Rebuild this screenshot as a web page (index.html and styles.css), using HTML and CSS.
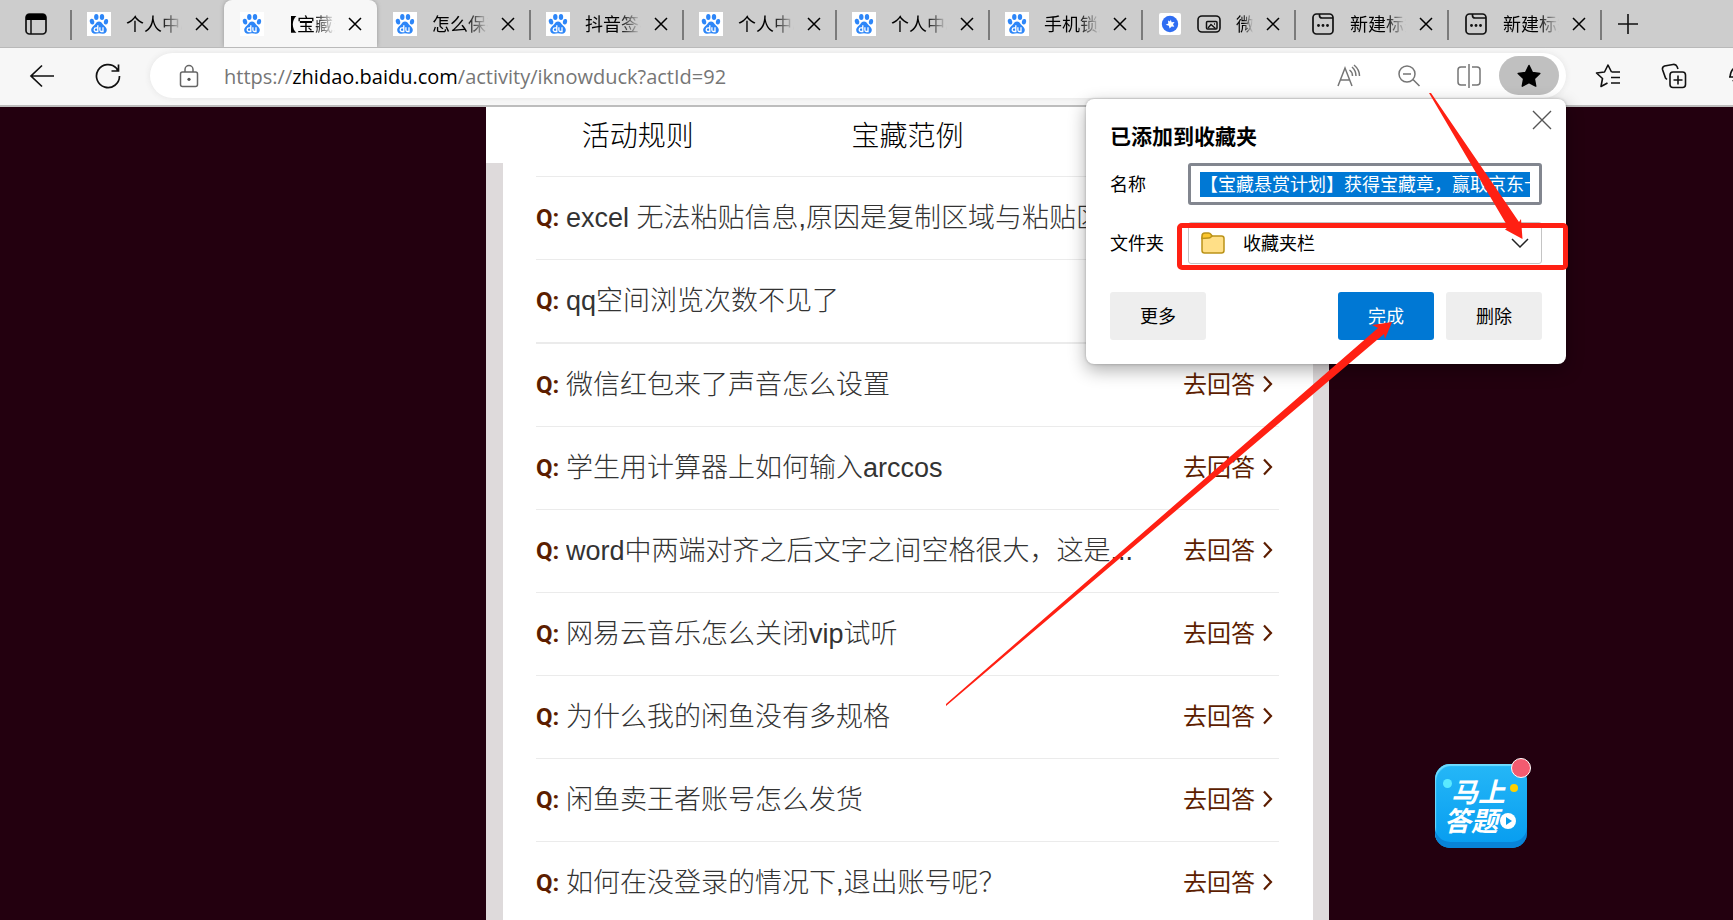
FILE: index.html
```html
<!DOCTYPE html>
<html lang="zh-CN">
<head>
<meta charset="utf-8">
<title>【宝藏悬赏计划】</title>
<link rel="stylesheet" href="styles.css">
</head>
<body>
<svg class="defs" width="0" height="0" aria-hidden="true">
  <symbol id="paw" viewBox="0 0 24 24">
    <rect width="24" height="24" fill="#fff"/>
    <g fill="#2d86f8">
      <ellipse cx="9.3" cy="5" rx="2.2" ry="3"/>
      <ellipse cx="15" cy="5" rx="2.2" ry="3"/>
      <ellipse cx="5" cy="9.6" rx="2.2" ry="2.9" transform="rotate(-12 5 9.6)"/>
      <ellipse cx="19" cy="9.8" rx="2.1" ry="2.8" transform="rotate(12 19 9.8)"/>
      <path d="M12 9.4c2 0 2.8 1.4 3.8 2.8 1.300 1.700 4 2.900 4 5.800 0 2.400-1.700 3.700-3.800 3.700-1.500 0-2.600-.4-4-.4s-2.500.4-4 .4c-2.200 0-3.800-1.400-3.800-3.700 0-2.900 2.700-4.100 4-5.800 1-1.400 1.800-2.800 3.800-2.800z"/>
    </g>
    <g fill="none" stroke="#fff" stroke-width="1.300"><path d="M10.800 13.200v6.300H9a1.700 1.700 0 0 1 0-3.600h1.800M12.900 15.300v2.700c0 1 .5 1.500 1.400 1.500h1.700v-4.300"/></g>
  </symbol>
  <symbol id="close" viewBox="0 0 14 14"><path d="M1 1l12 12M13 1L1 13" fill="none" stroke="currentColor" stroke-width="1.500"/></symbol>
  <symbol id="newtab" viewBox="0 0 22 22"><g fill="none" stroke="#111" stroke-width="1.700"><rect x="1" y="1" width="20" height="20" rx="3.500"/><path d="M7.500 1v1.500q0 2.500 2.500 2.500h11"/></g><g fill="#111"><circle cx="6.500" cy="12.500" r="1.400"/><circle cx="11" cy="12.500" r="1.400"/><circle cx="15.500" cy="12.500" r="1.400"/></g></symbol>
  <symbol id="go" viewBox="0 0 11 18"><path d="M2 1.500L9 9l-7 7.500" fill="none" stroke="currentColor" stroke-width="2.200"/></symbol>
</svg>

<header class="browser">
  <nav class="tabstrip" aria-label="标签页">
    <button class="tab-actions" aria-label="标签操作"><svg width="22" height="22" viewBox="0 0 22 22"><rect x="1" y="1" width="20" height="20" rx="3.500" fill="none" stroke="#111" stroke-width="1.700"/><path d="M1 7V4q0-3 3-3h14q3 0 3 3v3z" fill="#000"/><path d="M6 7v14" stroke="#111" stroke-width="1.500"/></svg></button>
    <div class="tab no-line"><svg class="fav"><use href="#paw"/></svg><span class="label">个人中心</span><button class="x" aria-label="关闭"><svg><use href="#close"/></svg></button></div>
    <div class="tab active"><svg class="fav"><use href="#paw"/></svg><span class="label">【宝藏悬</span><button class="x" aria-label="关闭"><svg><use href="#close"/></svg></button></div>
    <div class="tab"><svg class="fav"><use href="#paw"/></svg><span class="label">怎么保存</span><button class="x" aria-label="关闭"><svg><use href="#close"/></svg></button></div>
    <div class="tab"><svg class="fav"><use href="#paw"/></svg><span class="label">抖音签名</span><button class="x" aria-label="关闭"><svg><use href="#close"/></svg></button></div>
    <div class="tab"><svg class="fav"><use href="#paw"/></svg><span class="label">个人中心</span><button class="x" aria-label="关闭"><svg><use href="#close"/></svg></button></div>
    <div class="tab"><svg class="fav"><use href="#paw"/></svg><span class="label">个人中心</span><button class="x" aria-label="关闭"><svg><use href="#close"/></svg></button></div>
    <div class="tab"><svg class="fav"><use href="#paw"/></svg><span class="label">手机锁屏</span><button class="x" aria-label="关闭"><svg><use href="#close"/></svg></button></div>
    <div class="tab"><svg class="fav" viewBox="0 0 24 24"><rect x="1" y="1" width="22" height="22" rx="2" fill="#fff"/><circle cx="12" cy="12" r="8.200" fill="#2f6df2"/><path d="M12.800 7.500l.8 2.700 3-.2-1.600 2.300 1.300 2.500-2.700-.4-2 2-.7-2.700-3.200-1 2.600-1.300-.3-2.800 2 1z" fill="#fff"/></svg><svg class="pip" viewBox="0 0 24 18"><rect x="1" y="1" width="22" height="16" rx="4" fill="none" stroke="#111" stroke-width="1.600"/><rect x="9.500" y="6.500" width="10.500" height="7.500" rx="1" fill="none" stroke="#111" stroke-width="1.500"/><path d="M11 13l3-3.500 4.500 4M17 9h1" fill="none" stroke="#111" stroke-width="1.300"/></svg><span class="label">微信</span><button class="x" aria-label="关闭"><svg><use href="#close"/></svg></button></div>
    <div class="tab"><svg class="fav" viewBox="-1 -1 24 24"><use href="#newtab" width="22" height="22"/></svg><span class="label">新建标签</span><button class="x" aria-label="关闭"><svg><use href="#close"/></svg></button></div>
    <div class="tab"><svg class="fav" viewBox="-1 -1 24 24"><use href="#newtab" width="22" height="22"/></svg><span class="label">新建标签</span><button class="x" aria-label="关闭"><svg><use href="#close"/></svg></button></div>
    <button class="add" aria-label="新建标签页"><svg width="22" height="22" viewBox="0 0 22 22"><path d="M11 1v20M1 11h20" stroke="#111" stroke-width="1.600"/></svg></button>
  </nav>

  <div class="toolbar">
    <button class="tool" aria-label="返回"><svg width="26" height="24" viewBox="0 0 26 24"><path d="M13 1.500L2 12l11 10.500M2 12h23" fill="none" stroke="#111" stroke-width="1.700"/></svg></button>
    <button class="tool" aria-label="刷新"><svg width="26" height="26" viewBox="0 0 26 26"><path d="M24.500 13A11.500 11.500 0 1 1 21.500 5.300L23 8M23.500 1.500V8h-7" fill="none" stroke="#111" stroke-width="1.700"/></svg></button>
    <div class="omnibox">
      <svg class="lock" width="20" height="24" viewBox="0 0 20 24"><g fill="none" stroke="#666" stroke-width="1.500"><rect x="1.500" y="8" width="17" height="14.500" rx="2"/><path d="M6 8V5.500a4 4 0 0 1 8 0V8"/></g><circle cx="10" cy="15.300" r="1.600" fill="#555"/></svg>
      <a class="url" href="#">https://<b>zhidao.baidu.com</b>/activity/iknowduck?actId=92</a>
      <button class="inner" aria-label="朗读"><svg width="24" height="24" viewBox="0 0 24 24"><path d="M1 22L8 4l7 18M3.500 16h9M12.500 6q3 2 3 6M15 3q4 3.500 4 9M17 1q5.500 4.500 5.500 11" fill="none" stroke="#757575" stroke-width="1.500"/></svg></button>
      <button class="inner" aria-label="缩小"><svg width="24" height="24" viewBox="0 0 24 24"><path d="M16 15.500l6.500 6.500M6 10h8" fill="none" stroke="#757575" stroke-width="1.600"/><circle cx="10" cy="10" r="8" fill="none" stroke="#757575" stroke-width="1.500"/></svg></button>
      <button class="inner" aria-label="分屏"><svg width="24" height="24" viewBox="0 0 24 24"><path d="M9 3H4Q1 3 1 6v12q0 3 3 3h5M15 3h5q3 0 3 3v12q0 3-3 3h-5M12 0v24" fill="none" stroke="#757575" stroke-width="1.500"/></svg></button>
      <button class="inner starred" aria-label="编辑收藏夹"><svg width="26" height="26" viewBox="0 0 26 26"><path d="M13 2.500l3.300 6.900 7.500 1-5.500 5.200 1.400 7.500-6.700-3.600-6.700 3.600 1.400-7.500L2.200 10.400l7.500-1z" fill="#000" stroke="#000" stroke-width="1.500" stroke-linejoin="round"/></svg></button>
    </div>
    <button class="tool" aria-label="收藏夹"><svg width="26" height="26" viewBox="0 0 26 26"><path d="M16.500 9L13 2 9.500 9 1.500 10l6 5.500L6 23.500l6.500-3.500M16.500 9h8.500M16 14.500h9M16 20h9" fill="none" stroke="#111" stroke-width="1.600" stroke-linejoin="round"/></svg></button>
    <button class="tool" aria-label="集锦"><svg width="26" height="26" viewBox="0 0 26 26"><g fill="none" stroke="#111" stroke-width="1.600"><rect x="9" y="9" width="15.500" height="15.500" rx="3"/><path d="M17 12.500v9M12.500 17h9M6 16.500L4.500 15 1.500 6.500Q1 4 3.500 3L12 1.500Q15 1 16 3.500L17 6"/></g></svg></button>
    <button class="tool" aria-label="浏览器概要"><svg width="24" height="24" viewBox="0 0 24 24"><path d="M12 3Q3 2 2 13M1 13h9M5 16q2 5 8 5" fill="none" stroke="#111" stroke-width="1.600"/></svg></button>
  </div>
</header>

<main class="page">
  <section class="panel">
    <nav class="sections"><a href="#">活动规则</a><a href="#">宝藏范例</a></nav>
    <ul class="questions">
      <li><b>Q:</b><span>excel 无法粘贴信息,原因是复制区域与粘贴区域</span><a href="#">去回答<svg><use href="#go"/></svg></a></li>
      <li><b>Q:</b><span>qq空间浏览次数不见了</span><a href="#">去回答<svg><use href="#go"/></svg></a></li>
      <li><b>Q:</b><span>微信红包来了声音怎么设置</span><a href="#">去回答<svg><use href="#go"/></svg></a></li>
      <li><b>Q:</b><span>学生用计算器上如何输入arccos</span><a href="#">去回答<svg><use href="#go"/></svg></a></li>
      <li><b>Q:</b><span>word中两端对齐之后文字之间空格很大，这是...</span><a href="#">去回答<svg><use href="#go"/></svg></a></li>
      <li><b>Q:</b><span>网易云音乐怎么关闭vip试听</span><a href="#">去回答<svg><use href="#go"/></svg></a></li>
      <li><b>Q:</b><span>为什么我的闲鱼没有多规格</span><a href="#">去回答<svg><use href="#go"/></svg></a></li>
      <li><b>Q:</b><span>闲鱼卖王者账号怎么发货</span><a href="#">去回答<svg><use href="#go"/></svg></a></li>
      <li><b>Q:</b><span>如何在没登录的情况下,退出账号呢？</span><a href="#">去回答<svg><use href="#go"/></svg></a></li>
    </ul>
  </section>
</main>

<button class="answer-now">
  <span>马上</span><span>答题<svg width="16" height="16" viewBox="0 0 16 16"><circle cx="8" cy="8" r="8" fill="#fff"/><path d="M6 4l6 4-6 4z" fill="#079ce9"/></svg></span>
  <i class="dot red"></i><i class="dot cyan"></i><i class="dot yellow"></i>
</button>

<form class="popup">
  <button type="button" class="dismiss" aria-label="关闭"><svg width="20" height="20" viewBox="0 0 20 20"><path d="M1 1l18 18M19 1L1 19" stroke="#555" stroke-width="1.400"/></svg></button>
  <h2>已添加到收藏夹</h2>
  <div class="field"><label for="name">名称</label><div class="box name"><input id="name" type="text" value="【宝藏悬赏计划】获得宝藏章，赢取京东卡"></div></div>
  <div class="field"><label for="folder">文件夹</label><div class="box folder">
    <svg width="24" height="22" viewBox="0 0 24 22"><rect x="1" y="4" width="22" height="17" rx="2.500" fill="#ffdf87" stroke="#bb9318" stroke-width="1.500"/><path d="M1 6.500V4q0-3 3-3h3.500q1.500 0 2.500 1.500l1 1.500-1 1q-1 1-2.500 1z" fill="#fcc62d" stroke="#bb9318" stroke-width="1.500"/></svg>
    <select id="folder"><option>收藏夹栏</option></select>
    <svg class="chevron" width="18" height="11" viewBox="0 0 18 11"><path d="M1 1l8 8 8-8" fill="none" stroke="#222" stroke-width="1.500"/></svg>
  </div></div>
  <div class="actions"><button type="button">更多</button><button type="button" class="primary">完成</button><button type="button">删除</button></div>
  <div class="mark"></div>
</form>

<svg class="arrows" width="1733" height="920" viewBox="0 0 1733 920" fill="#ff2013" aria-hidden="true">
  <path d="M1429 93h2L1519 222l2-3 1.500 20L1505 229.500l3-2.500z"/>
  <path d="M946 704L1378 328l-6-3 20-3-7 17-1-5L946 706z"/>
</svg>
</body>
</html>
```
FILE: styles.css
```css
* { box-sizing: border-box; }
body {
  margin: 0;
  height: 100vh;
  overflow: hidden;
  position: relative;
  display: flex;
  flex-direction: column;
  background: #23000f;
  font-family: "Open Sans", "Noto Sans CJK SC", sans-serif;
  font-size: 18px;
  color: #000;
}
button, input, select { font: inherit; color: inherit; border: 0; padding: 0; background: none; }
a { color: inherit; text-decoration: none; }
svg { flex: none; display: block; }
.defs { position: absolute; }

.browser { flex: none; overflow: hidden; }
.tabstrip { display: flex; height: 48px; background: #cdcdcd; border-bottom: 1px solid #b9b9b9; overflow: hidden; }
.tab-actions, .tab, .add { position: relative; display: flex; align-items: center; }
.tab-actions { flex: none; width: 71px; padding-left: 25px; }
.tab { flex: 0 1 153px; min-width: 0; padding: 0 15px 0 16px; }
.tab-actions::after, .tab::after { content: ""; position: absolute; right: -1px; top: 10px; width: 2px; height: 30px; background: #7b7b7b; }
.tab.no-line::after, .tab.active::after { display: none; }
.tab.active { background: #f7f7f7; border-radius: 8px 8px 0 0; box-shadow: 0 0 4px #999; }
.fav { width: 24px; height: 24px; }
.pip { width: 24px; height: 18px; margin-left: 15px; }
.label { flex: 1; min-width: 0; margin: 0 13px 0 15px; overflow: hidden; white-space: nowrap; line-height: 26px; -webkit-mask-image: linear-gradient(90deg, #000 calc(100% - 22px), transparent); mask-image: linear-gradient(90deg, #000 calc(100% - 22px), transparent); }
.pip + .label { -webkit-mask-image: linear-gradient(90deg, #000 40%, transparent); mask-image: linear-gradient(90deg, #000 40%, transparent); }
.x svg { width: 14px; height: 14px; }
.add { flex: none; padding-left: 16px; }

.toolbar { display: flex; align-items: center; height: 59px; margin-right: -40px; padding: 0 0 2px 9px; background: #f7f7f7; border-bottom: 2px solid #bdbdbd; }
.tool { flex: none; display: flex; justify-content: center; width: 66px; }
.omnibox { flex: 1; min-width: 0; display: flex; align-items: center; height: 45px; margin: 0 9px; padding: 0 7px 0 29px; border-radius: 23px; background: #fff; box-shadow: 0 0 6px #e4e4e4; }
.url { flex: 1; min-width: 0; margin-left: 25px; padding-top: 2px; overflow: hidden; white-space: nowrap; font-size: 20px; line-height: 30px; color: #767676; }
.url b { font-weight: 400; color: #000; }
.inner { flex: none; display: flex; align-items: center; justify-content: center; width: 60px; height: 39px; }
.starred { border-radius: 20px; background: #c0c0c0; }

.page { flex: 1; min-height: 0; display: grid; grid-template-columns: 486fr 843fr 404fr; }
.panel { grid-column: 2; min-width: 0; display: flex; flex-direction: column; background: #dedadb; }
.sections { flex: none; display: grid; grid-template-columns: repeat(3, 1fr); align-items: center; height: 56px; padding: 0 17px; background: #fff; font-size: 28px; font-weight: 300; line-height: 40px; text-align: center; }
.questions { flex: 1; margin: 0 16px 0 17px; padding: 13px 34px 0 33px; list-style: none; background: #fff; }
.questions li { display: flex; align-items: center; height: 83px; border-top: 1px solid #ebebeb; white-space: nowrap; }
.questions li:nth-child(3) { height: 84px; border-top-width: 2px; }
.questions b { width: 30px; font: 700 24px/32px Roboto, sans-serif; color: #5c1d00; }
.questions span { flex: 1; min-width: 0; overflow: hidden; font: 300 27px/40px "Liberation Sans", "Noto Sans CJK SC", sans-serif; color: #333; }
.questions a { display: flex; align-items: center; gap: 7px; padding: 0 6px 2px 0; font-size: 24px; line-height: 32px; color: #5c1d00; }
.questions a svg { width: 11px; height: 18px; }

.popup { position: absolute; top: 99px; right: 167px; width: 480px; padding: 21px 24px 24px; border-radius: 8px; background: #fff; box-shadow: 0 6px 18px rgba(0, 0, 0, .32), 0 0 3px rgba(0, 0, 0, .25); }
.popup h2 { margin: 0 0 11px; font-size: 21px; line-height: 32px; }
.dismiss { position: absolute; top: 11px; right: 14px; }
.field { display: flex; align-items: center; margin-bottom: 17px; }
.field label { width: 78px; padding-bottom: 2px; }
.box { flex: 1; min-width: 0; display: flex; align-items: center; height: 42px; border-radius: 3px; }
.name { border: 3px solid #82868f; padding: 0 9px; }
.name input { width: 100%; height: 25px; padding-bottom: 2px; background: #0078d4; color: #fff; outline: 0; }
.folder { border: 1px solid #c4c4c4; padding: 0 12px; }
.folder select { flex: 1; appearance: none; margin-left: 18px; height: 38px; outline: 0; }
.actions { display: flex; gap: 12px; margin-top: 28px; }
.actions button { width: 96px; height: 48px; padding-bottom: 2px; border-radius: 3px; background: #eee; }
.actions button:first-child { margin-right: auto; }
.actions .primary { background: #0078d4; color: #fff; }
.mark { position: absolute; top: 124px; right: -2px; width: 391px; height: 47px; border: 5px solid #ff2013; border-radius: 5px; pointer-events: none; }

.answer-now { position: absolute; right: 206px; bottom: 72px; width: 92px; height: 84px; padding: 0 0 0 9px; border-radius: 15px; background: linear-gradient(#25b7f7, #069cf0); box-shadow: inset 0 -6px 0 #0884d8, inset 1px 2px 1px #6fdcff; color: #fff; font-size: 27px; font-style: italic; font-weight: 700; line-height: 29px; text-align: left; }
.answer-now span { display: flex; align-items: center; gap: 2px; }
.answer-now span:first-child { padding-left: 7px; }
.dot { position: absolute; border-radius: 50%; }
.red { top: -6px; right: -4px; width: 20px; height: 20px; background: #f35b70; border: 1px solid #fff; }
.cyan { top: 15px; left: 8px; width: 9px; height: 9px; background: #5beaff; }
.yellow { top: 20px; right: 9px; width: 8px; height: 8px; background: #ffd000; }
.arrows { position: absolute; top: 0; right: 0; pointer-events: none; }
```
